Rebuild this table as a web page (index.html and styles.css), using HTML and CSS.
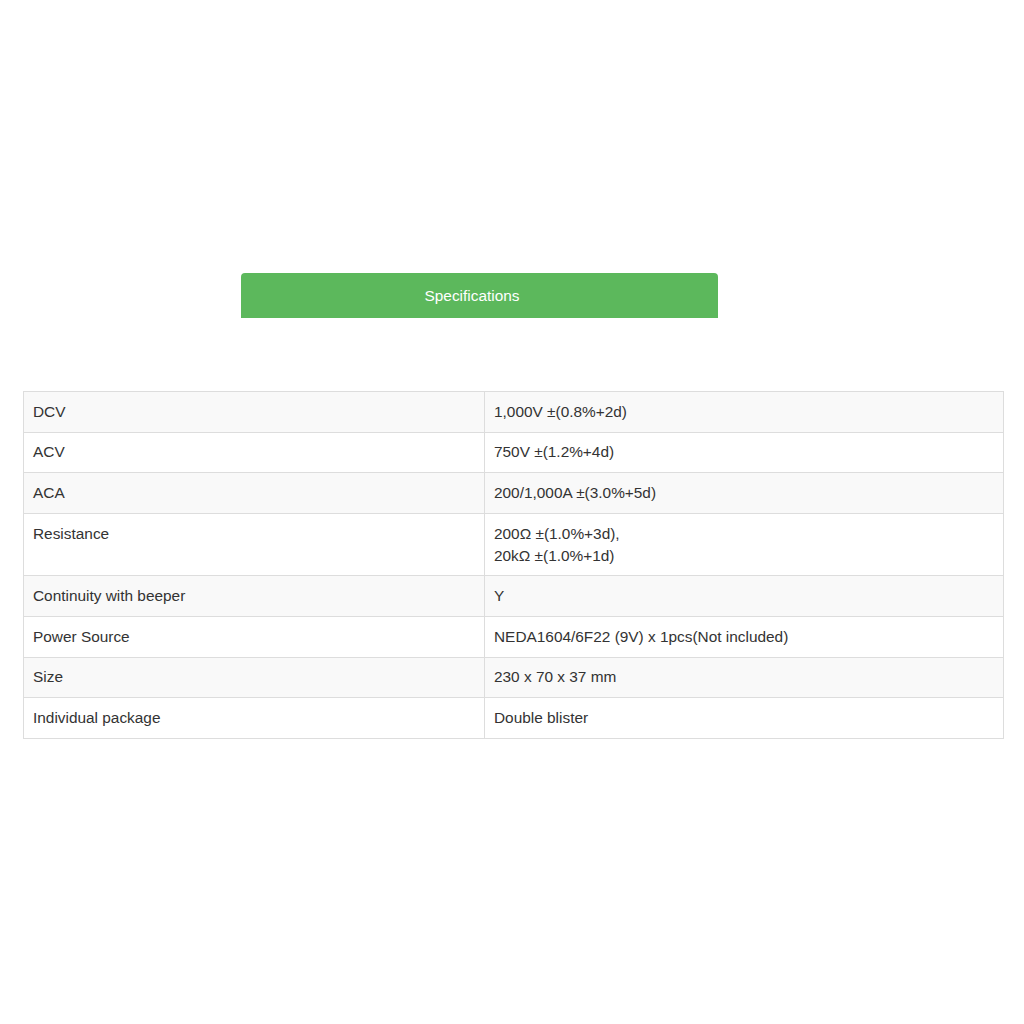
FILE: index.html
```html
<!DOCTYPE html>
<html>
<head>
<meta charset="utf-8">
<link rel="stylesheet" href="styles.css">
</head>
<body>
<div class="page">
  <div class="tab-row">
    <div class="tab">Specifications</div>
  </div>
  <table class="spec">
    <tbody>
      <tr><td>DCV</td><td>1,000V ±(0.8%+2d)</td></tr>
      <tr><td>ACV</td><td>750V ±(1.2%+4d)</td></tr>
      <tr><td>ACA</td><td>200/1,000A ±(3.0%+5d)</td></tr>
      <tr><td>Resistance</td><td>200Ω ±(1.0%+3d),<br>20kΩ ±(1.0%+1d)</td></tr>
      <tr><td>Continuity with beeper</td><td>Y</td></tr>
      <tr><td>Power Source</td><td>NEDA1604/6F22 (9V) x 1pcs(Not included)</td></tr>
      <tr><td>Size</td><td>230 x 70 x 37 mm</td></tr>
      <tr><td>Individual package</td><td>Double blister</td></tr>
    </tbody>
  </table>
</div>
</body>
</html>
```
FILE: styles.css
```css
html, body {
  margin: 0;
  padding: 0;
  background: #fff;
}
body {
  font-family: "Liberation Sans", Arial, sans-serif;
  color: #333;
}
.page {
  padding: 273px 20px 0 23px;
}
.tab-row {
  display: flex;
  padding-left: 218px;
}
.tab {
  width: 477px;
  height: 45px;
  box-sizing: border-box;
  padding-right: 15px;
  background: #5cb85c;
  color: #fff;
  border-radius: 4px 4px 0 0;
  font-size: 15.4px;
  display: flex;
  align-items: center;
  justify-content: center;
}
.spec {
  margin-top: 73px;
  width: 981px;
  border-collapse: collapse;
  border: 1px solid #ddd;
  font-size: 15.4px;
  line-height: 22px;
}
.spec td {
  border: 1px solid #ddd;
  padding: 8.8px 9px;
  vertical-align: top;
  text-align: left;
}
.spec td:first-child {
  width: 442px;
}
.spec tr:nth-child(odd) td {
  background: #f9f9f9;
}
```
